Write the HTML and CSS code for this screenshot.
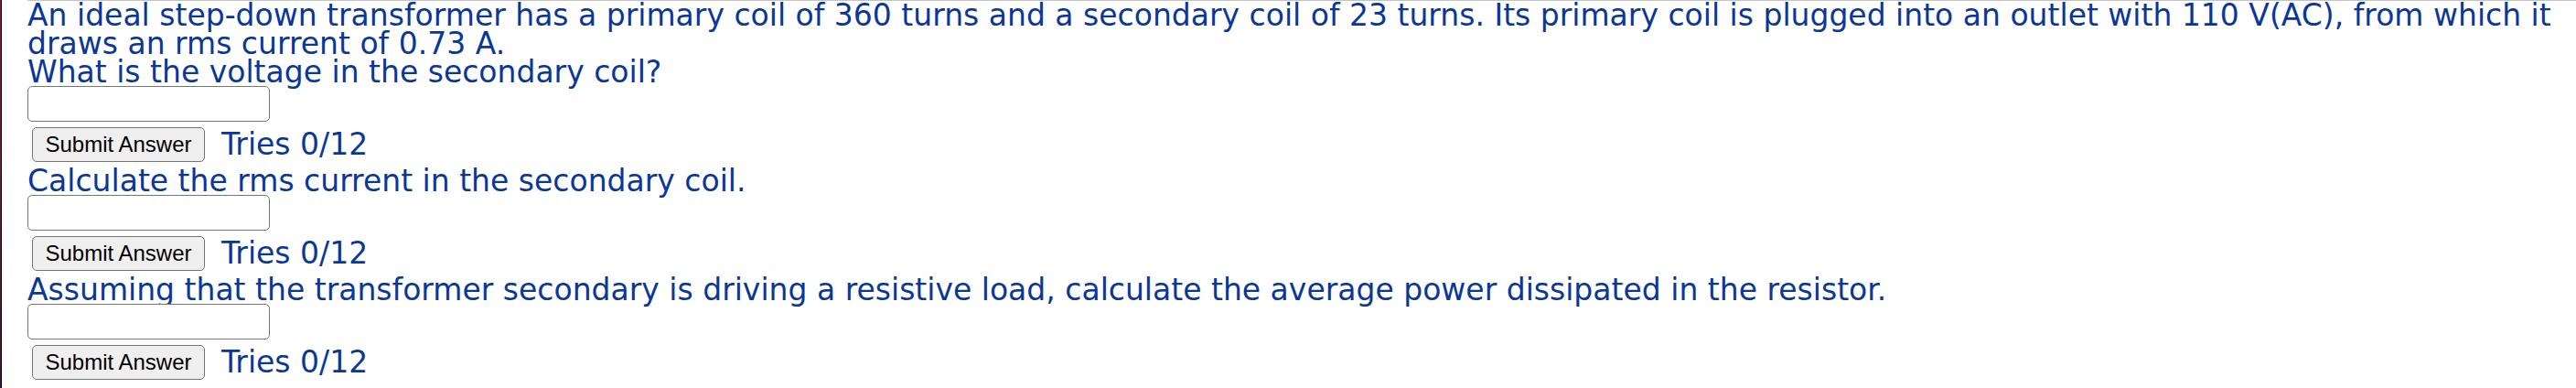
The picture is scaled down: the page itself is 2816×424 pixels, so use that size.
FILE: index.html
```html
<!DOCTYPE html>
<html lang="en">
<head>
    <meta charset="UTF-8">
    <meta name="viewport" content="width=device-width, initial-scale=1.0">
    <title>Transformer Problem</title>
    <link rel="stylesheet" href="styles.css">
</head>
<body>
    <div class="edge"></div>
    <main class="problem">
        <p class="intro">An ideal step-down transformer has a primary coil of 360 turns and a secondary coil of 23 turns. Its primary coil is plugged into an outlet with 110 V(AC), from which it draws an rms current of 0.73 A.</p>

        <form class="part">
            <label class="question" for="voltage">What is the voltage in the secondary coil?</label>
            <input class="answer" type="text" id="voltage" name="voltage">
            <div class="submit-row">
                <button class="submit-button" type="button">Submit Answer</button>
                <span class="tries">Tries 0/12</span>
            </div>
        </form>

        <form class="part">
            <label class="question" for="current">Calculate the rms current in the secondary coil.</label>
            <input class="answer" type="text" id="current" name="current">
            <div class="submit-row">
                <button class="submit-button" type="button">Submit Answer</button>
                <span class="tries">Tries 0/12</span>
            </div>
        </form>

        <form class="part">
            <label class="question" for="power">Assuming that the transformer secondary is driving a resistive load, calculate the average power dissipated in the resistor.</label>
            <input class="answer" type="text" id="power" name="power">
            <div class="submit-row">
                <button class="submit-button" type="button">Submit Answer</button>
                <span class="tries">Tries 0/12</span>
            </div>
        </form>
    </main>
</body>
</html>
```
FILE: styles.css
```css
* {
    box-sizing: border-box;
}
html {
    background: white;
}
body {
    display: flex;
    margin: 0;
    min-height: 100vh;
    font-family: Verdana, "DejaVu Sans", sans-serif;
    font-size: 33px;
    line-height: 31px;
    color: #0b3796;
}
.edge {
    width: 2px;
    margin-right: 28px;
    border-right: 1px solid black;
    background: linear-gradient(#a8083c, #8c0a44 50%, #4a1050);
}
.problem {
    flex: 1;
    border-top: 1px solid #c4c4c4;
}
.intro {
    margin: 0;
    padding-right: 16px;
}
.part {
    display: flex;
    flex-direction: column;
    align-items: flex-start;
}
.answer {
    width: 265px;
    height: 39px;
    margin: 0;
    padding: 2px 6px;
    border: 1px solid #767676;
    border-radius: 5px;
    background: white;
    font-family: Arial, "Liberation Sans", sans-serif;
    font-size: 24px;
}
.submit-row {
    display: flex;
    align-items: center;
    gap: 18px;
    height: 49px;
    padding-left: 5px;
}
.submit-button {
    width: 189px;
    height: 38px;
    padding: 0;
    border: 1px solid #767676;
    border-radius: 5px;
    background: #efefef;
    color: black;
    font-family: Arial, "Liberation Sans", sans-serif;
    font-size: 24px;
}
```
